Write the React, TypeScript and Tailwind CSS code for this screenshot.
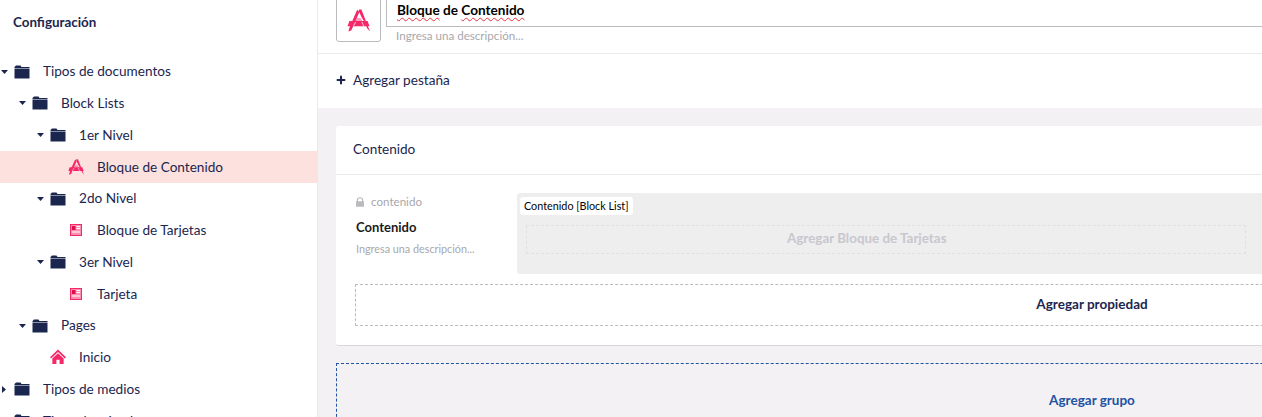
import { Plus } from 'lucide-react';

const pads = ['pl-0', 'pl-[18px]', 'pl-9', 'pl-[54px]'];

function AppIcon({ className }: { className: string }) {
  return (
    <svg viewBox="0 0 24 24" className={className} fill="#f5296a">
      <path d="M12.6 0.5 15 0.5 24 23.5 21 20 18 13 15.5 9 12.2 2z" />
      <path d="M10.6 0.8 13 3 4.5 22.5 1.5 23.5 2.5 19.5z" />
      <path d="M2.5 12.5H21.5L23.5 18H0.5z" />
      <path d="M10.5 9.5 14 9.5 16 12.5 8.5 12.5z" opacity="0.45" />
      <path d="M6 18 8.5 13.5 9.5 14 7 18z" fill="#ffffff" opacity="0.7" />
      <path d="M15 13.5 16 13.5 18.2 18 17 18z" fill="#ffffff" opacity="0.7" />
    </svg>
  );
}

function FolderIcon() {
  return (
    <svg viewBox="0 0 16 14" className="w-4 h-[14px]" fill="#1b264f">
      <path d="M2 0.5H6.5L7.5 2H15.5V3.5H0.5V2z" />
      <path d="M0.5 4H15.5V13.5H0.5z" />
    </svg>
  );
}

function CardIcon() {
  return (
    <svg viewBox="0 0 12 12" className="w-3 h-3 ml-[2px]">
      <rect x="0" y="0" width="12" height="12" fill="#f5296a" />
      <rect x="1" y="1" width="10" height="10" fill="#fb8fb0" />
      <rect x="2" y="2" width="3.5" height="4" fill="#e0104f" />
      <rect x="6.5" y="2" width="3.5" height="1" fill="#ffffff" />
      <rect x="6.5" y="4" width="3.5" height="1" fill="#ffffff" />
      <rect x="2" y="7.5" width="8" height="1" fill="#ffffff" />
    </svg>
  );
}

function HomeIcon() {
  return (
    <svg viewBox="0 0 17 16" className="w-[17px] h-4" fill="#f5296a">
      <path d="M8.5 0 17 8.2 15.8 9.6 8.5 2.6 1.2 9.6 0 8.2z" />
      <path d="M8.5 4 14.5 9.6V15.5H10.2V11H6.8V15.5H2.5V9.6z" />
    </svg>
  );
}

function Caret({ dir }: { dir?: 'down' | 'right' }) {
  if (!dir) return <span className="w-[14px] shrink-0" />;
  return (
    <span className="w-[14px] shrink-0 flex items-center pl-px">
      {dir === 'down' ? (
        <svg viewBox="0 0 7 4" className="w-[7px] h-1" fill="#1b264f"><path d="M0 0H7L3.5 4z" /></svg>
      ) : (
        <svg viewBox="0 0 4 7" className="w-1 h-[7px] ml-[1px]" fill="#1b264f"><path d="M0 0V7L4 3.5z" /></svg>
      )}
    </span>
  );
}

type RowProps = { level: number; label: string; caret?: 'down' | 'right'; icon: React.ReactNode; active?: boolean };

function Row({ level, label, caret, icon, active }: RowProps) {
  return (
    <div className={`h-[31.75px] shrink-0 flex items-center ${pads[level]} ${active ? 'bg-[#fde1de]' : ''}`}>
      <Caret dir={caret} />
      <span className="w-4 shrink-0 flex items-center">{icon}</span>
      <span className="ml-[13px] text-[13.6px] text-[#1b264f] whitespace-nowrap">{label}</span>
    </div>
  );
}

export default function App() {
  return (
    <div className="w-[1262px] h-[417px] overflow-hidden flex bg-white font-['Lato','Liberation_Sans',sans-serif]">
      <aside className="w-[318px] shrink-0 border-r border-[#e9e9eb] flex flex-col">
        <div className="h-[55.8px] shrink-0 pl-[13px] pt-[13px] text-[13.4px] font-bold leading-[18px] text-[#1b264f]">Configuración</div>
        <Row level={0} label="Tipos de documentos" caret="down" icon={<FolderIcon />} />
        <Row level={1} label="Block Lists" caret="down" icon={<FolderIcon />} />
        <Row level={2} label="1er Nivel" caret="down" icon={<FolderIcon />} />
        <Row level={3} label="Bloque de Contenido" icon={<AppIcon className="w-4 h-4" />} active />
        <Row level={2} label="2do Nivel" caret="down" icon={<FolderIcon />} />
        <Row level={3} label="Bloque de Tarjetas" icon={<CardIcon />} />
        <Row level={2} label="3er Nivel" caret="down" icon={<FolderIcon />} />
        <Row level={3} label="Tarjeta" icon={<CardIcon />} />
        <Row level={1} label="Pages" caret="down" icon={<FolderIcon />} />
        <Row level={2} label="Inicio" icon={<HomeIcon />} />
        <Row level={0} label="Tipos de medios" caret="right" icon={<FolderIcon />} />
        <Row level={0} label="Tipos de miembros" caret="right" icon={<FolderIcon />} />
      </aside>

      <main className="w-[1548px] shrink-0 flex flex-col bg-[#f3f1f3]">
        <div className="bg-white shrink-0">
          <div className="h-[54px] border-b border-[#e9e9eb] flex pl-[18px] items-start">
            <div className="w-[45px] h-[48px] -mt-[6px] shrink-0 border border-[#bbbabf] rounded-[3px] flex items-center justify-center pt-[5px]">
              <AppIcon className="w-[23px] h-[23px]" />
            </div>
            <div className="ml-[5px] flex-1">
              <div className="h-[27px] border-l border-b border-[#bbbabf] pl-[10px] text-[13.6px] font-bold leading-[20px] text-black">
                <span className="underline decoration-wavy decoration-[#e8323c] decoration-1 underline-offset-2">Bloque</span>{' '}
                de{' '}
                <span className="underline decoration-wavy decoration-[#e8323c] decoration-1 underline-offset-2">Contenido</span>
              </div>
              <div className="pl-[10px] mt-[1px] text-[11.6px] leading-[15px] text-[#a8a7ac]">Ingresa una descripción...</div>
            </div>
          </div>
          <div className="h-[54px] flex items-center pb-[2px] pl-[19px] text-[13.6px] text-[#1b264f]">
            <Plus className="w-3 h-3 mr-[6px] -ml-[2px]" strokeWidth={4} />
            <span>Agregar pestaña</span>
          </div>
        </div>

        <div className="px-[18px] pt-[18px] flex flex-col">
          <section className="h-[220px] bg-white rounded-[3px] border-b border-[#d8d7d9] flex flex-col">
            <div className="h-[49px] shrink-0 border-b border-[#e9e9eb] flex items-center pb-[2px] pl-[17px] text-[13.6px] text-[#1b264f]">Contenido</div>
            <div className="pt-[18px] pl-[20px] pr-[19px] flex">
              <div className="w-[161px] shrink-0">
                <div className="flex items-center h-4 mt-[1px] text-[11.6px] text-[#a8a7ac]">
                  <svg viewBox="0 0 10 12" className="w-2 h-[10px] mr-[7px]" fill="#bbbabf">
                    <path d="M1 5V3.5a4 3.5 0 0 1 8 0V5h1v7H0V5zM2.5 5h5V3.5a2.5 2.2 0 0 0-5 0z" />
                  </svg>
                  <span>contenido</span>
                </div>
                <div className="mt-[8px] text-[13px] font-bold leading-[18px] text-[#1b1b1b]">Contenido</div>
                <div className="mt-[6px] text-[10.8px] leading-[14px] text-[#a8a7ac]">Ingresa una descripción...</div>
              </div>
              <div className="relative flex-1 h-[81px] bg-[#eeeeee] rounded-[3px] pt-[32px] pl-[9px]">
                <span className="absolute left-[3px] top-1 bg-white rounded-[3px] px-1 text-[10.8px] leading-[18px] text-black">Contenido [Block List]</span>
                <div className="w-[720px] h-[29px] border border-dashed border-[#e0e0e0] rounded-[1px] flex items-center pb-[2px] pl-[260px] text-[13.4px] font-bold text-[#c8c7cf]">Agregar Bloque de Tarjetas</div>
              </div>
            </div>
            <div className="mt-[10px] ml-[19px] mr-[19px] h-[42px] border border-dashed border-[#bbbabf] rounded-[1px] flex items-center justify-center pb-[2px] text-[13.5px] font-bold text-[#1b264f]">Agregar propiedad</div>
          </section>
          <div className="mt-[17px] h-[120px] border border-dashed border-[#2152a3] rounded-[1px] flex justify-center pt-[26px] text-[13.5px] font-bold text-[#2152a3]">Agregar grupo</div>
        </div>
      </main>
    </div>
  );
}
